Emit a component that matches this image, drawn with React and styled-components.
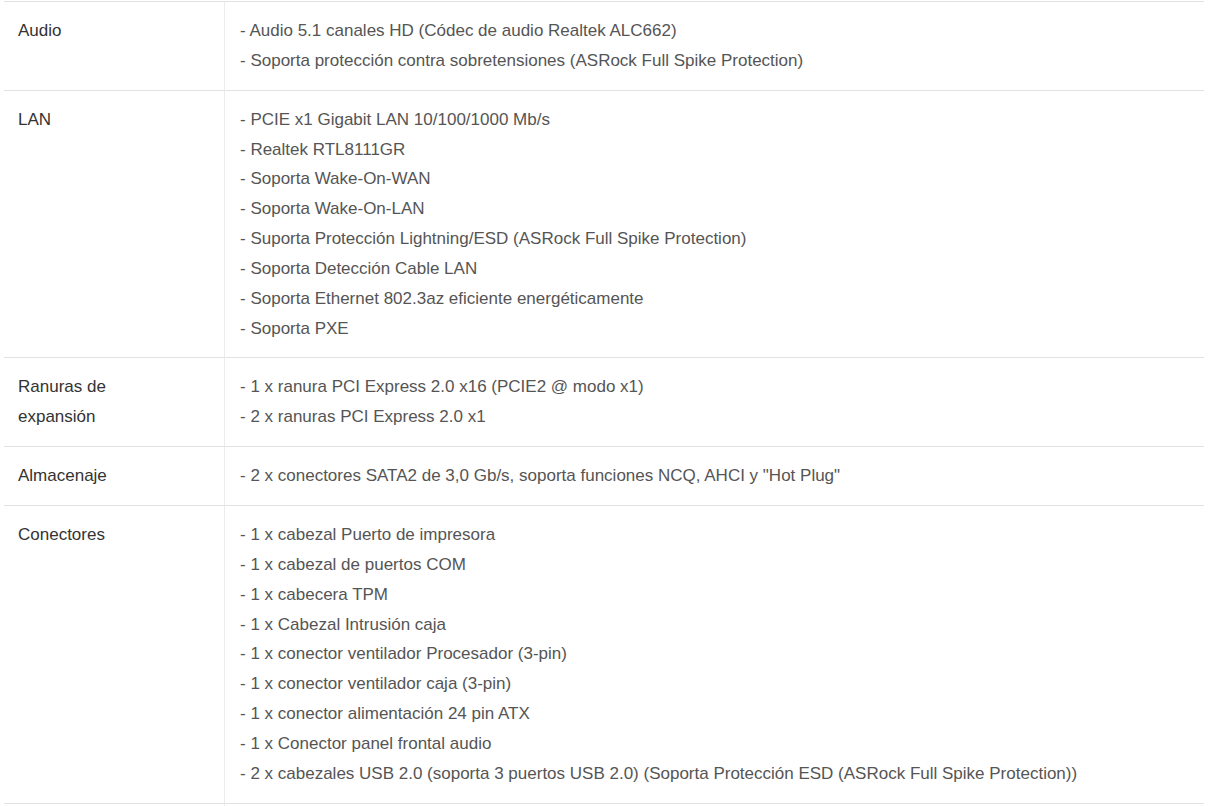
import React from "react";
import styled, { createGlobalStyle } from "styled-components";

const Global = createGlobalStyle`
  html, body { margin: 0; padding: 0; background: #fff; }
  body { font-family: "Liberation Sans", Arial, sans-serif; }
`;

const Page = styled.div`
  padding: 1px 14px 0 4px;
`;

const Table = styled.div`
  width: 1200px;
  display: grid;
  grid-template-columns: 221px 1fr;
  border-top: 1px solid #e2e2e2;
`;

const Label = styled.div`
  padding: 14px 60px 14px 14px;
  border-bottom: ${(p) => (p.$last ? "none" : "1px solid #e2e2e2")};
  border-right: 1px solid #ececec;
  font-size: 17px;
  line-height: 29.85px;
  color: #333;
`;

const Value = styled.div`
  padding: 14px 15px;
  border-bottom: ${(p) => (p.$last ? "none" : "1px solid #e2e2e2")};
  font-size: 17px;
  line-height: 29.85px;
  color: #555;
`;

const Spacer = styled.div`
  height: 4px;
  border-right: ${(p) => (p.$left ? "1px solid #ececec" : "none")};
`;

const Line = styled.div`
  white-space: nowrap;
`;

const rows = [
  {
    label: "Audio",
    lines: [
      "- Audio 5.1 canales HD (Códec de audio Realtek ALC662)",
      "- Soporta protección contra sobretensiones (ASRock Full Spike Protection)",
    ],
  },
  {
    label: "LAN",
    lines: [
      "- PCIE x1 Gigabit LAN 10/100/1000 Mb/s",
      "- Realtek RTL8111GR",
      "- Soporta Wake-On-WAN",
      "- Soporta Wake-On-LAN",
      "- Suporta Protección Lightning/ESD (ASRock Full Spike Protection)",
      "- Soporta Detección Cable LAN",
      "- Soporta Ethernet 802.3az eficiente energéticamente",
      "- Soporta PXE",
    ],
  },
  {
    label: "Ranuras de expansión",
    lines: [
      "- 1 x ranura PCI Express 2.0 x16 (PCIE2 @ modo x1)",
      "- 2 x ranuras PCI Express 2.0 x1",
    ],
  },
  {
    label: "Almacenaje",
    lines: [
      '- 2 x conectores SATA2 de 3,0 Gb/s, soporta funciones NCQ, AHCI y "Hot Plug"',
    ],
  },
  {
    label: "Conectores",
    lines: [
      "- 1 x cabezal Puerto de impresora",
      "- 1 x cabezal de puertos COM",
      "- 1 x cabecera TPM",
      "- 1 x Cabezal Intrusión caja",
      "- 1 x conector ventilador Procesador (3-pin)",
      "- 1 x conector ventilador caja (3-pin)",
      "- 1 x conector alimentación 24 pin ATX",
      "- 1 x Conector panel frontal audio",
      "- 2 x cabezales USB 2.0 (soporta 3 puertos USB 2.0) (Soporta Protección ESD (ASRock Full Spike Protection))",
    ],
  },
];

export default function App() {
  return (
    <Page>
      <Global />
      <Table>
        {rows.map((r) => (
          <React.Fragment key={r.label}>
            <Label>{r.label}</Label>
            <Value>
              {r.lines.map((l, i) => (
                <Line key={i}>{l}</Line>
              ))}
            </Value>
          </React.Fragment>
        ))}
        <Spacer $left />
        <Spacer />
      </Table>
    </Page>
  );
}
